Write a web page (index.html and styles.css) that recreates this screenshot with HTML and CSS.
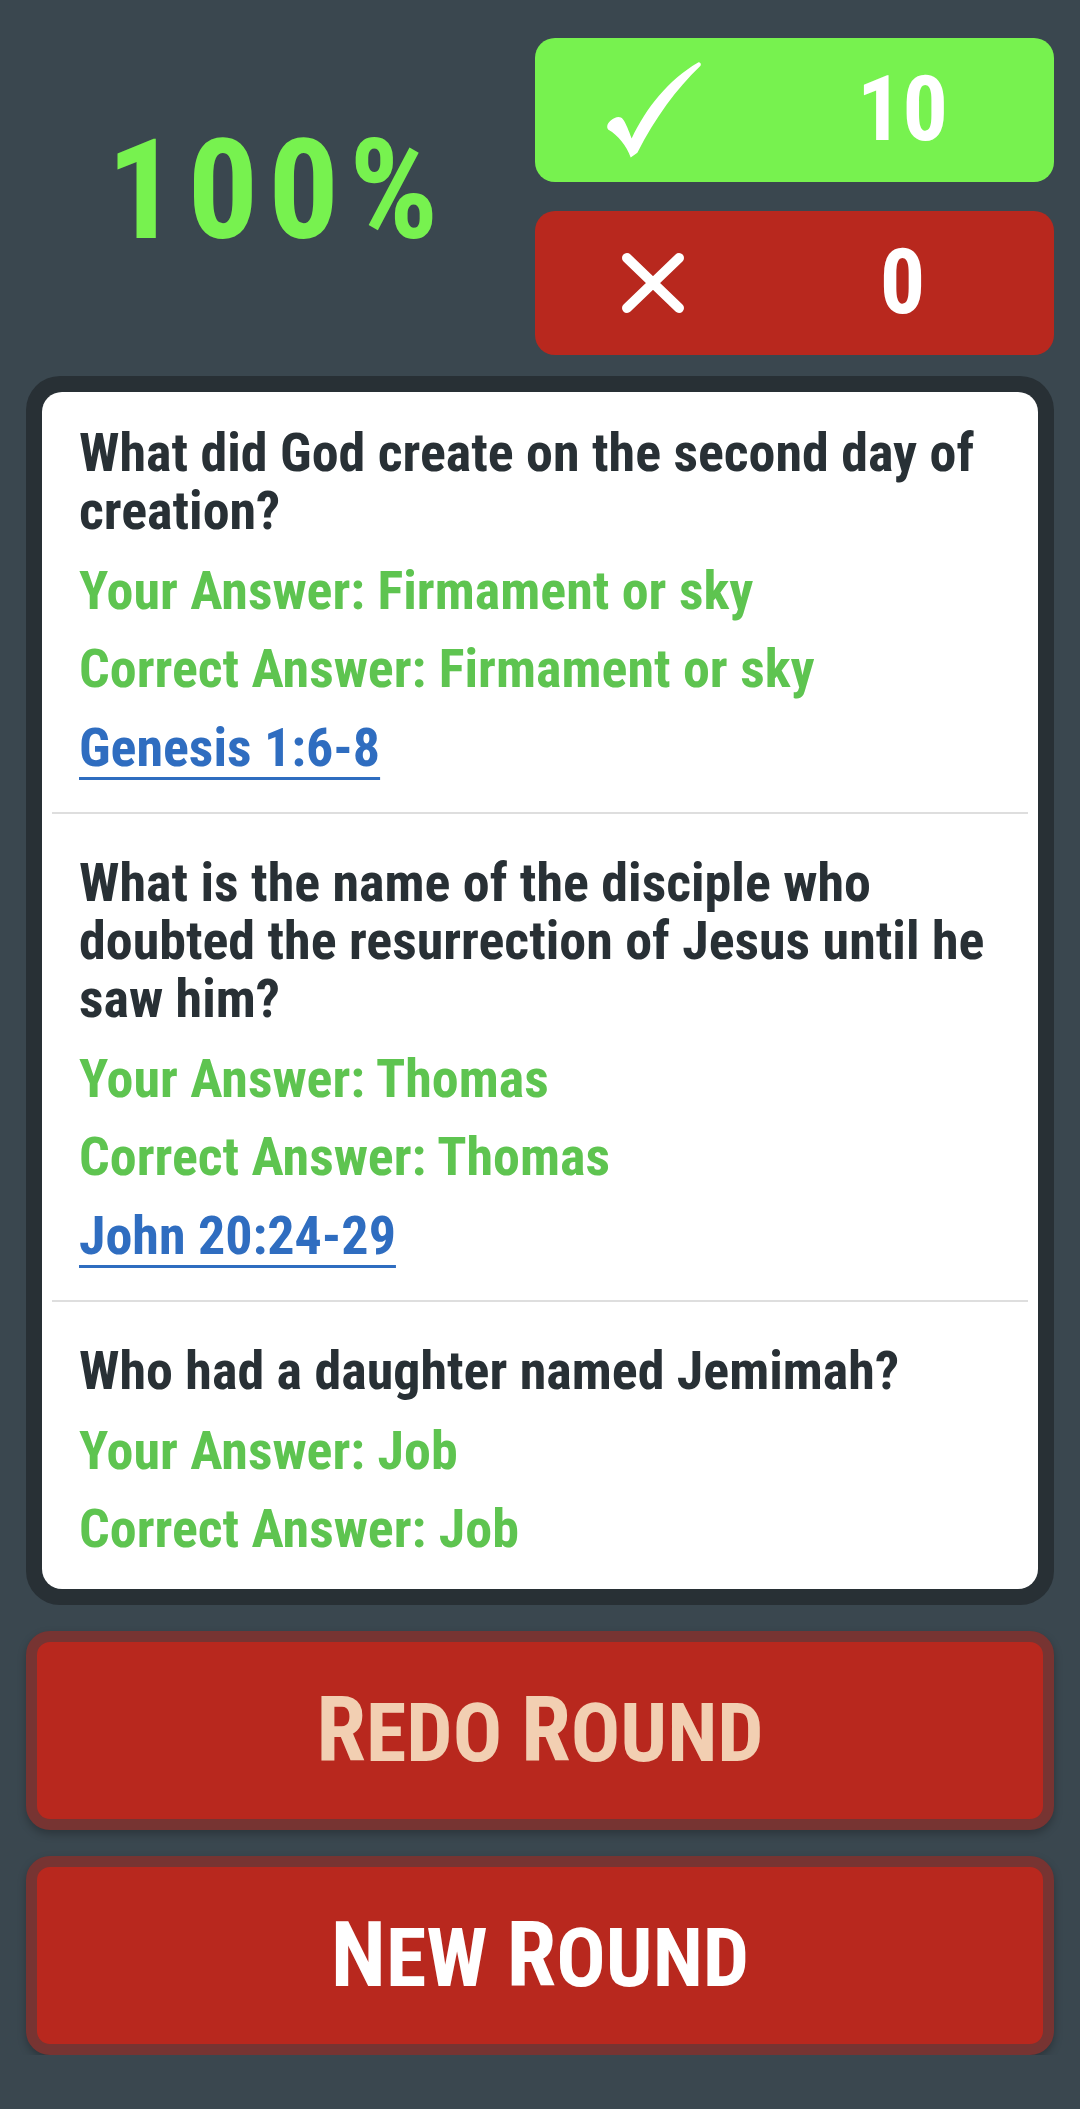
FILE: index.html
```html
<!DOCTYPE html>
<html lang="en">
<head>
<meta charset="utf-8">
<title>Round Results</title>
<link rel="stylesheet" href="styles.css">
</head>
<body>
<main class="screen">
  <header class="summary">
    <div class="percent">100%</div>
    <div class="tallies">
      <div class="tally tally-correct">
        <svg class="icon-check" viewBox="0 0 100 100" aria-hidden="true">
          <path d="M26 100 C22 88 12 76 3 71 C0 69 1 64 5 61 C10 57 15 56 18 60 C21 64 24 72 27 80 C42 48 66 18 97 0 C99 -1 101 2 99 4 C74 28 52 58 33 95 Z"/>
        </svg>
        <span class="tally-num">10</span>
      </div>
      <div class="tally tally-wrong">
        <svg class="icon-x" viewBox="0 0 66 64" aria-hidden="true">
          <path d="M7 7 L59 57 M59 7 L7 57"/>
        </svg>
        <span class="tally-num">0</span>
      </div>
    </div>
  </header>

  <section class="results">
    <ul class="result-list">
      <li class="result">
        <p class="question">What did God create on the second day of creation?</p>
        <p class="answer">Your Answer: Firmament or sky</p>
        <p class="answer">Correct Answer: Firmament or sky</p>
        <p class="ref-line"><a class="ref" href="#">Genesis 1:6-8</a></p>
      </li>
      <li class="result">
        <p class="question">What is the name of the disciple who doubted the resurrection of Jesus until he saw him?</p>
        <p class="answer">Your Answer: Thomas</p>
        <p class="answer">Correct Answer: Thomas</p>
        <p class="ref-line"><a class="ref" href="#">John 20:24-29</a></p>
      </li>
      <li class="result">
        <p class="question">Who had a daughter named Jemimah?</p>
        <p class="answer">Your Answer: Job</p>
        <p class="answer">Correct Answer: Job</p>
      </li>
    </ul>
  </section>

  <div class="actions">
    <button class="btn btn-redo"><span class="label"><span class="initial">R</span>edo <span class="initial">R</span>ound</span></button>
    <button class="btn btn-new"><span class="label"><span class="initial">N</span>ew <span class="initial">R</span>ound</span></button>
  </div>
</main>
</body>
</html>
```

FILE: styles.css
```css
* { box-sizing: border-box; }

html, body {
  margin: 0;
  padding: 0;
}

body {
  background: #3a474f;
  font-family: "Roboto Condensed", "Noto Sans", "Open Sans", "DejaVu Sans", sans-serif;
  font-stretch: 75%;
  font-weight: 700;
}

.screen {
  padding: 38px 26px 0;
}

/* ---------- summary ---------- */
.summary {
  display: grid;
  grid-template-columns: 1fr 519px;
  align-items: center;
}

.percent {
  text-align: center;
  padding: 0 6px 14px 0;
  font-size: 140px;
  line-height: 1;
  letter-spacing: 10px;
  color: #77f24f;
}

.tallies {
  display: flex;
  flex-direction: column;
  gap: 29px;
}

.tally {
  height: 144px;
  border-radius: 20px;
  display: grid;
  grid-template-columns: 236px 1fr;
  padding-right: 20px;
  align-items: center;
  justify-items: center;
  color: #fff;
}

.tally-correct { background: #77f24f; }
.tally-wrong { background: #b8281e; }

.tally-num {
  font-size: 90px;
  line-height: 1;
}

.icon-check {
  width: 95px;
  height: 100px;
  fill: #fff;
}

.icon-x {
  width: 66px;
  height: 64px;
  fill: none;
  stroke: #fff;
  stroke-width: 10;
  stroke-linecap: round;
}

/* ---------- results card ---------- */
.results {
  margin-top: 21px;
  background: #283035;
  border-radius: 34px;
  padding: 16px;
}

.result-list {
  list-style: none;
  margin: 0;
  padding: 0 10px;
  background: #fff;
  border-radius: 20px;
}

.result {
  padding: 32px 27px 35px;
}

.result + .result {
  border-top: 2px solid #dedede;
  padding-top: 40px;
}

.result:last-child {
  padding-bottom: 31px;
}

.question,
.answer,
.ref-line {
  font-size: 54px;
  line-height: 58px;
}

.question {
  margin: 0;
  color: #283035;
}

.answer {
  margin: 20px 0 0;
  color: #5ec450;
}

.question + .answer {
  margin-top: 22px;
}

.ref-line {
  margin: 21px 0 0;
}

.ref {
  color: #2f6dc0;
  text-decoration: underline;
  text-decoration-thickness: 3px;
  text-underline-offset: 11px;
}

/* ---------- buttons ---------- */
.actions {
  margin-top: 26px;
  display: flex;
  flex-direction: column;
  gap: 26px;
}

.btn {
  width: 100%;
  height: 199px;
  border: 11px solid #773432;
  border-radius: 24px;
  background: #b8281e;
  box-shadow: 0 4px 8px rgba(0, 0, 0, 0.25);
  display: flex;
  align-items: center;
  justify-content: center;
  padding: 0;
  font-family: inherit;
  font-stretch: 75%;
  font-weight: 700;
  font-size: 82px;
  line-height: 1;
  text-transform: uppercase;
  cursor: pointer;
}

.btn .initial {
  font-size: 90px;
}

.btn-redo { color: #f2cfb2; }
.btn-new { color: #fff; }
```
